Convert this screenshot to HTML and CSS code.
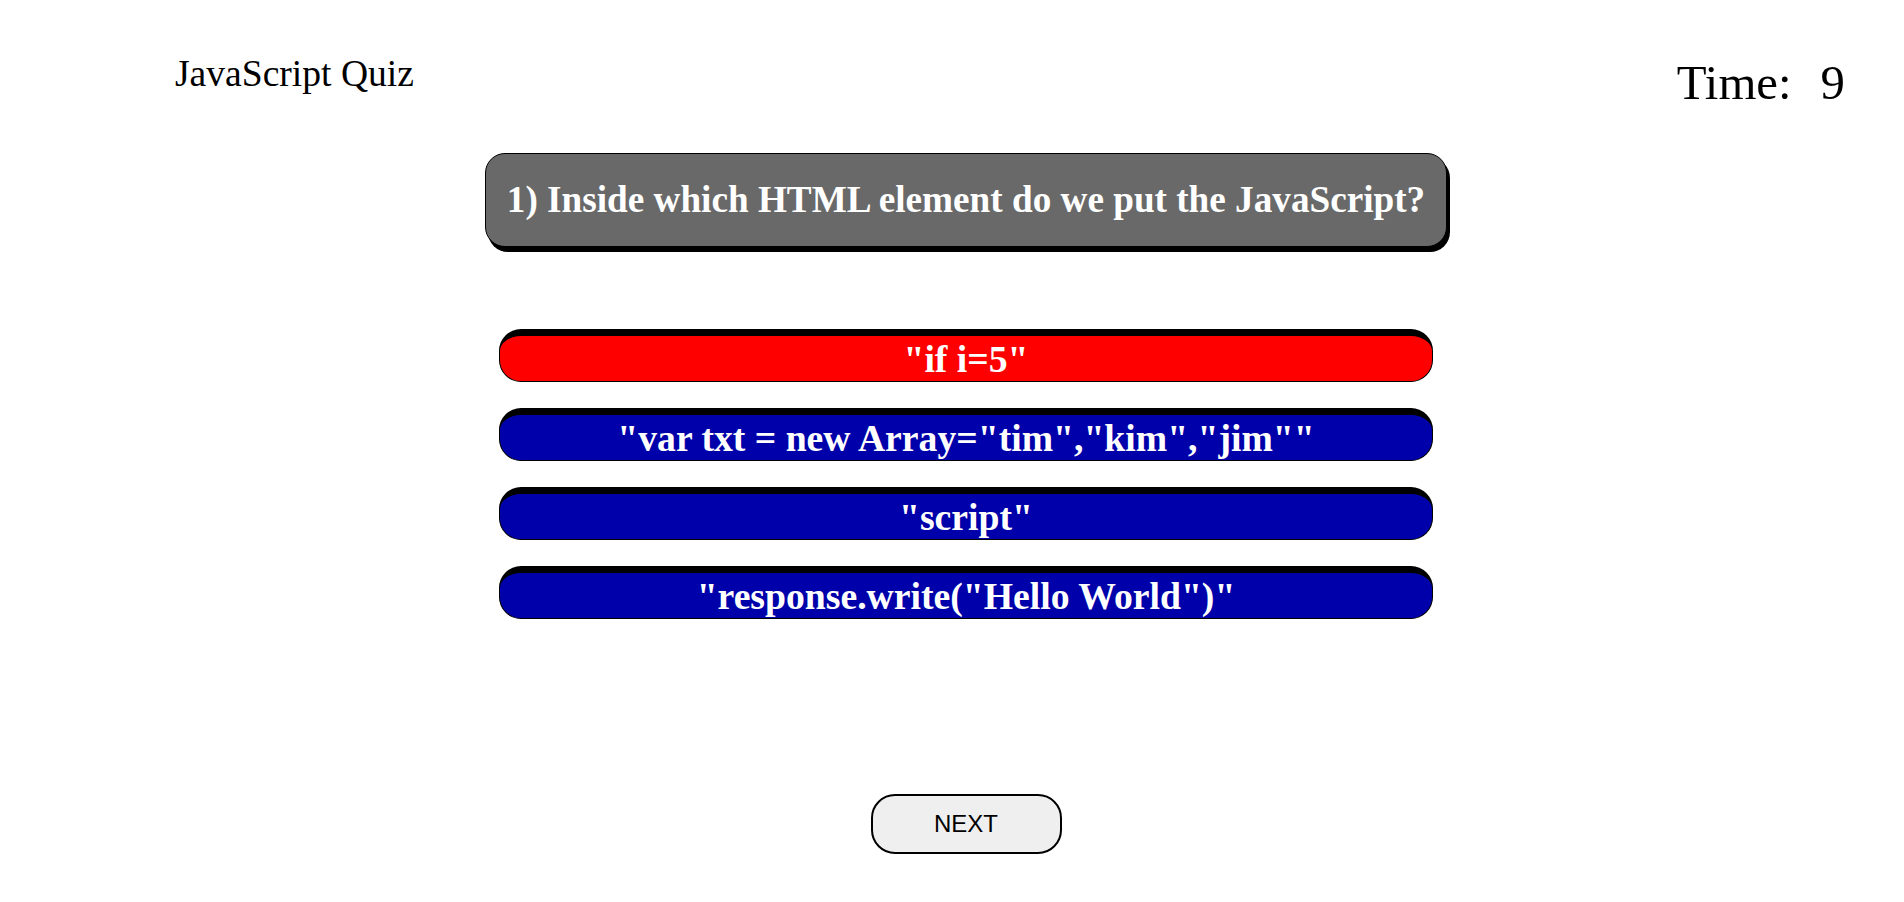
FILE: index.html
```html
<!DOCTYPE html>
<html lang="en">
<head>
<meta charset="utf-8">
<title>JavaScript Quiz</title>
<link rel="stylesheet" href="styles.css">
</head>
<body>
<header class="top">
  <div class="brand">JavaScript Quiz</div>
  <div class="timer">Time:<span class="timer-value">9</span></div>
</header>
<main class="quiz">
  <div class="question">1) Inside which HTML element do we put the JavaScript?</div>
  <div class="answers">
    <button class="answer answer-wrong">"if i=5"</button>
    <button class="answer">"var txt = new Array="tim","kim","jim""</button>
    <button class="answer">"script"</button>
    <button class="answer">"response.write("Hello World")"</button>
  </div>
  <button class="next">NEXT</button>
</main>
</body>
</html>
```
FILE: styles.css
```css
html, body {
  margin: 0;
  padding: 0;
  background: #fff;
}

body {
  font-family: "Liberation Serif", "Times New Roman", serif;
  color: #000;
}

.top {
  display: flex;
  justify-content: space-between;
  align-items: flex-start;
  padding: 53px 59px 0 175px;
  height: 58px;
}

.brand {
  font-size: 37.6px;
  line-height: 42px;
}

.timer {
  font-size: 48.8px;
  line-height: 55px;
  margin-top: 3px;
}

.timer-value {
  margin-left: 29px;
}

.quiz {
  display: flex;
  flex-direction: column;
  align-items: center;
  padding-left: 28px;
}

.question {
  margin-top: 42px;
  background: #696969;
  color: #fff;
  font-weight: bold;
  font-size: 37.2px;
  line-height: 42px;
  padding: 25px 21px;
  border: 1px solid #000;
  border-radius: 20px;
  box-shadow: 3px 5px 0 #000;
  white-space: nowrap;
}

.answers {
  margin-top: 82px;
  display: flex;
  flex-direction: column;
  gap: 26px;
}

.answer {
  width: 934px;
  height: 53px;
  box-sizing: border-box;
  margin: 0;
  padding: 1px 6px;
  border-style: solid;
  border-color: #000;
  border-width: 7px 1px 1px 1px;
  border-radius: 22px;
  background: #0000aa;
  color: #fff;
  font-family: "Liberation Serif", "Times New Roman", serif;
  font-weight: bold;
  font-size: 37.7px;
  line-height: 42px;
  text-align: center;
  white-space: nowrap;
}

.answer-wrong {
  background: #ff0000;
}

.next {
  margin-top: 175px;
  width: 191px;
  height: 60px;
  box-sizing: border-box;
  border: 2px solid #000;
  border-radius: 24px;
  background: #efefef;
  color: #000;
  font-family: "Liberation Sans", Arial, sans-serif;
  font-size: 24px;
  padding: 0;
}
```
